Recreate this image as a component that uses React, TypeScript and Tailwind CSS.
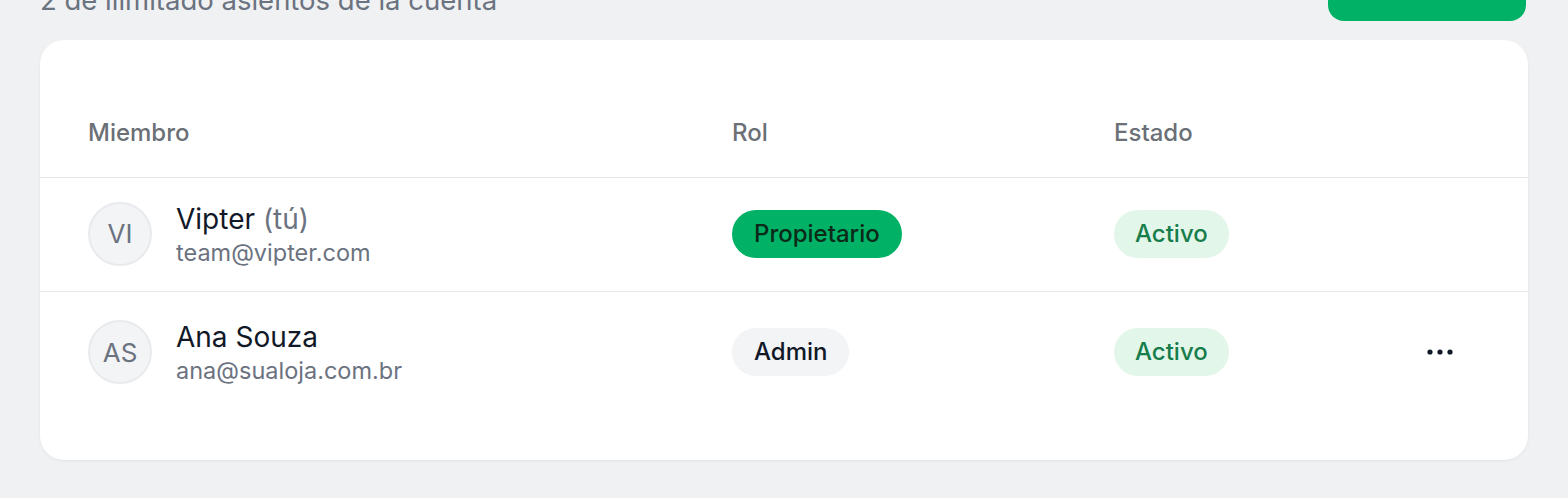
import React from "react";

type Member = {
  initials: string;
  name: string;
  you?: boolean;
  email: string;
  role: string;
  owner?: boolean;
  status: string;
  actions?: boolean;
};

const members: Member[] = [
  {
    initials: "VI",
    name: "Vipter",
    you: true,
    email: "team@vipter.com",
    role: "Propietario",
    owner: true,
    status: "Activo",
  },
  {
    initials: "AS",
    name: "Ana Souza",
    email: "ana@sualoja.com.br",
    role: "Admin",
    status: "Activo",
    actions: true,
  },
];

const cols = "grid grid-cols-[644px_382px_1fr_80px] items-center";

const DotsIcon = () => (
  <svg width="26" height="6" viewBox="0 0 26 6" fill="#111827">
    <circle cx="3" cy="3" r="2.6" />
    <circle cx="13" cy="3" r="2.6" />
    <circle cx="23" cy="3" r="2.6" />
  </svg>
);

const App: React.FC = () => {
  return (
    <div
      className="h-[498px] w-full overflow-hidden bg-[#f0f1f3] px-10"
      style={{ fontFamily: "Inter, 'Noto Sans', sans-serif" }}
    >
      <div className="-mt-[27px] flex items-end justify-between">
        <p className="text-[27.5px] leading-[36px] text-[#6b7280] pb-[3px]">
          2 de ilimitado asientos de la cuenta
        </p>
        <button className="mr-[2px] h-12 w-[198px] rounded-2xl bg-[#00b166]" />
      </div>

      <div className="mt-[19px] rounded-[24px] bg-white pt-12 pb-[46px] shadow-[0_1px_3px_rgba(0,0,0,0.06)]">
        <div className={`${cols} h-[90px] border-b border-[#e5e7eb] px-12`}>
          <span className="text-[24px] font-medium text-[#6b6f76]">Miembro</span>
          <span className="text-[24px] font-medium text-[#6b6f76]">Rol</span>
          <span className="text-[24px] font-medium text-[#6b6f76]">Estado</span>
          <span />
        </div>

        {members.map((m, i) => {
          const last = i === members.length - 1;
          return (
            <div
              key={m.email}
              className={`${cols} px-12 pb-[2px] ${
                last ? "h-[122px]" : "h-[114px] border-b border-[#e5e7eb]"
              }`}
            >
              <div className="flex items-center gap-6">
                <div className="flex h-16 w-16 shrink-0 items-center justify-center rounded-full border-2 border-[#e8eaed] bg-[#f3f4f6] text-[26px] text-[#6b7280]">
                  {m.initials}
                </div>
                <div className="flex flex-col pt-[2px]">
                  <span className="text-[28px] leading-[36px] text-[#111827]">
                    {m.name}
                    {m.you && <span className="text-[#6b7280]"> (tú)</span>}
                  </span>
                  <span className="text-[23.5px] leading-[32px] text-[#6b7280]">
                    {m.email}
                  </span>
                </div>
              </div>

              <div>
                {m.owner ? (
                  <span className="inline-flex h-12 items-center rounded-full bg-[#00b166] px-[22px] text-[24px] font-medium text-[#0b2a18]">
                    {m.role}
                  </span>
                ) : (
                  <span className="inline-flex h-12 items-center rounded-full bg-[#f3f4f6] px-[22px] text-[24px] font-medium text-[#111827]">
                    {m.role}
                  </span>
                )}
              </div>

              <div>
                <span className="inline-flex h-12 items-center rounded-full bg-[#e3f6ea] px-[21px] text-[24px] font-medium text-[#177d4a]">
                  {m.status}
                </span>
              </div>

              <div className="flex justify-end pr-[20px]">
                {m.actions && (
                  <button className="flex h-10 w-10 items-center justify-center">
                    <DotsIcon />
                  </button>
                )}
              </div>
            </div>
          );
        })}
      </div>
    </div>
  );
};

export default App;
